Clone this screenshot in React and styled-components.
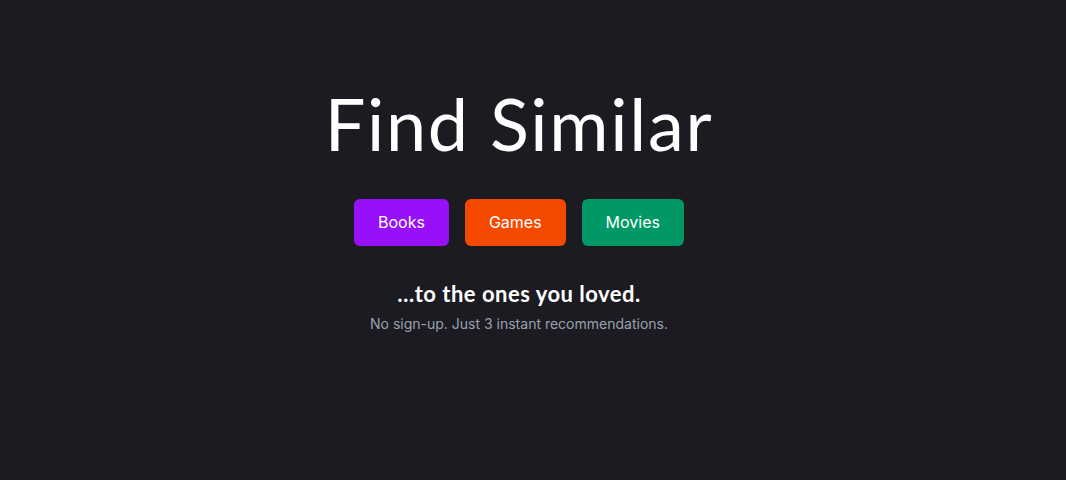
import React from "react";
import styled, { createGlobalStyle } from "styled-components";

const GlobalStyle = createGlobalStyle`
	html, body {
		margin: 0;
		padding: 0;
		background: #1c1b22;
	}
	body {
		font-family: Inter, "Noto Sans", sans-serif;
		color: #ffffff;
	}
`;

const Page = styled.main`
	min-height: 480px;
	display: flex;
	flex-direction: column;
	align-items: center;
	padding: 75px 28px 0 0;
	box-sizing: border-box;
`;

const Title = styled.h1`
	margin: 0;
	font-family: Lato, "Noto Sans", sans-serif;
	font-weight: 400;
	font-size: 72px;
	line-height: 96px;
	letter-spacing: 1.7px;
	color: #ffffff;
`;

const Choices = styled.div`
	display: flex;
	gap: 16px;
	margin-top: 28px;
`;

const Choice = styled.button`
	border: none;
	border-radius: 6px;
	padding: 12px 24px;
	font-family: Inter, sans-serif;
	font-size: 16px;
	line-height: 23px;
	height: 47px;
	color: #ffffff;
	background: ${(props) => props.$color};
	cursor: pointer;
`;

const Tagline = styled.h2`
	margin: 34px 0 0;
	font-family: Lato, "Noto Sans", sans-serif;
	font-weight: 700;
	font-size: 22px;
	line-height: 28px;
	letter-spacing: 0.5px;
	color: #ffffff;
`;

const Note = styled.p`
	margin: 6px 0 0;
	font-family: Inter, sans-serif;
	font-size: 14px;
	line-height: 20px;
	color: #99a1af;
`;

const categories = [
	{ label: "Books", color: "#9810fa" },
	{ label: "Games", color: "#f54900" },
	{ label: "Movies", color: "#009966" },
];

export default function App() {
	return (
		<>
			<GlobalStyle />
			<Page>
				<Title>Find Similar</Title>
				<Choices>
					{categories.map((c) => (
						<Choice key={c.label} $color={c.color}>
							{c.label}
						</Choice>
					))}
				</Choices>
				<Tagline>…to the ones you loved.</Tagline>
				<Note>No sign-up. Just 3 instant recommendations.</Note>
			</Page>
		</>
	);
}
